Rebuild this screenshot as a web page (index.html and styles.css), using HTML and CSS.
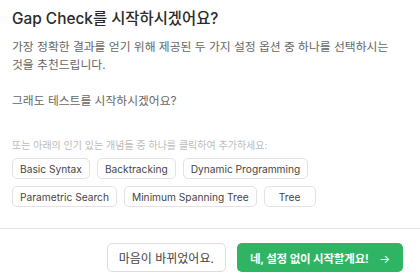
FILE: index.html
```html
<!DOCTYPE html>
<html lang="ko">
<head>
    <meta charset="UTF-8">
    <meta name="viewport" content="width=device-width, initial-scale=1.0">
    <title>Gap Check</title>
    <link rel="stylesheet" href="styles.css">
</head>
<body>
    <div class="dialog">
        <div class="dialog-body">
            <h2 class="title">Gap Check를 시작하시겠어요?</h2>
            <p class="desc">가장 정확한 결과를 얻기 위해 제공된 두 가지 설정 옵션 중 하나를 선택하시는 것을 추천드립니다.</p>
            <p class="desc">그래도 테스트를 시작하시겠어요?</p>

            <p class="hint">또는 아래의 인기 있는 개념들 중 하나를 클릭하여 추가하세요:</p>
            <div class="chips">
                <button class="chip">Basic Syntax</button>
                <button class="chip">Backtracking</button>
                <button class="chip">Dynamic Programming</button>
                <button class="chip">Parametric Search</button>
                <button class="chip">Minimum Spanning Tree</button>
                <button class="chip">Tree</button>
            </div>
        </div>

        <div class="dialog-footer">
            <button class="btn btn-secondary">마음이 바뀌었어요.</button>
            <button class="btn btn-primary">네, 설정 없이 시작할게요! <span class="arrow">→</span></button>
        </div>
    </div>
</body>
</html>
```

FILE: styles.css
```css
body {
    font-family: 'Inter', 'Noto Sans CJK KR', sans-serif;
    background-color: #fff;
    margin: 0;
    padding: 0;
    color: #222;
    word-break: keep-all;
}
.dialog {
    width: 420px;
    height: 279px;
    display: flex;
    flex-direction: column;
}
.dialog-body {
    padding: 8px 12px 0;
    flex: 1;
}
.title {
    font-size: 15.4px;
    font-weight: 500;
    line-height: 22px;
    margin: 0 0 8px;
    color: #2a2a2a;
}
.desc {
    font-size: 11.8px;
    line-height: 18px;
    color: #666;
    margin: 0 0 18px;
}
.hint {
    font-size: 10px;
    line-height: 14px;
    color: #bbb;
    margin: 28px 0 6px;
}
.chips {
    display: flex;
    flex-wrap: wrap;
    gap: 7px;
}
.chip {
    font-family: inherit;
    font-size: 10.2px;
    color: #444;
    background: #fff;
    border: 1px solid #e2e2e2;
    border-radius: 5px;
    height: 21px;
    padding: 0 7px;
    min-width: 52px;
}
.dialog-footer {
    border-top: 1px solid #e5e5e5;
    display: flex;
    justify-content: flex-end;
    gap: 11px;
    padding: 14px 17px 7px;
}
.btn {
    font-family: inherit;
    font-size: 12px;
    height: 29px;
    border-radius: 5px;
    padding: 0 11px;
    cursor: pointer;
}
.btn-secondary {
    background: #fff;
    color: #444;
    border: 1px solid #ddd;
}
.btn-primary {
    background: #2eb462;
    color: #fff;
    border: none;
    font-size: 11.5px;
    font-weight: 600;
    letter-spacing: -0.2px;
    padding: 0 13px;
}
.arrow {
    margin-left: 8px;
    font-weight: 400;
}
```
